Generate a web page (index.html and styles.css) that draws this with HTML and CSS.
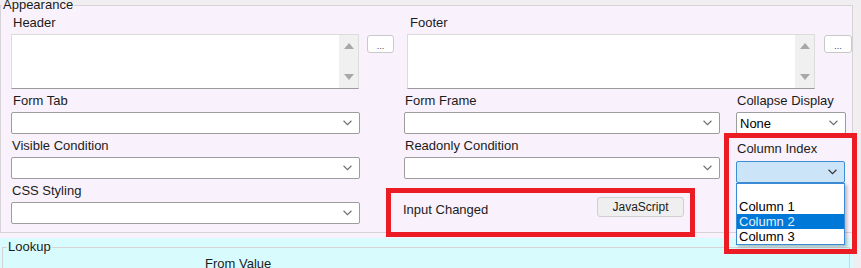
FILE: index.html
```html
<!DOCTYPE html>
<html lang="en">
<head>
    <meta charset="UTF-8">
    <meta name="viewport" content="width=device-width, initial-scale=1.0">
    <title>Field Properties</title>
    <link rel="stylesheet" href="styles.css">
</head>
<body>
    <div class="page">
        <fieldset class="group appearance">
            <legend>Appearance</legend>
            <div class="editors">
                <div class="field header-field">
                    <label>Header</label>
                    <div class="memo">
                        <div class="memo-bar"><span class="tri up"></span><span class="tri down"></span></div>
                    </div>
                </div>
                <button class="dots">...</button>
                <div class="field footer-field">
                    <label>Footer</label>
                    <div class="memo">
                        <div class="memo-bar"><span class="tri up"></span><span class="tri down"></span></div>
                    </div>
                </div>
                <button class="dots">...</button>
            </div>

            <div class="options">
                <div class="field col-a">
                    <label class="tab-label">Form Tab</label>
                    <div class="select"><span></span><svg class="chev" viewBox="0 0 8 5"><path d="M0.5 0.5 L4 4 L7.5 0.5"/></svg></div>
                </div>
                <div class="field col-b">
                    <label>Form Frame</label>
                    <div class="select"><span></span><svg class="chev" viewBox="0 0 8 5"><path d="M0.5 0.5 L4 4 L7.5 0.5"/></svg></div>
                </div>
                <div class="field col-c">
                    <label>Collapse Display</label>
                    <div class="select"><span>None</span><svg class="chev" viewBox="0 0 8 5"><path d="M0.5 0.5 L4 4 L7.5 0.5"/></svg></div>
                </div>

                <div class="field col-a">
                    <label>Visible Condition</label>
                    <div class="select"><span></span><svg class="chev" viewBox="0 0 8 5"><path d="M0.5 0.5 L4 4 L7.5 0.5"/></svg></div>
                </div>
                <div class="field col-b">
                    <label>Readonly Condition</label>
                    <div class="select"><span></span><svg class="chev" viewBox="0 0 8 5"><path d="M0.5 0.5 L4 4 L7.5 0.5"/></svg></div>
                </div>
                <div class="column-index">
                    <label>Column Index</label>
                    <div class="select open"><span></span><svg class="chev" viewBox="0 0 8 5"><path d="M0.5 0.5 L4 4 L7.5 0.5"/></svg></div>
                    <ul class="dropdown">
                        <li></li>
                        <li>Column 1</li>
                        <li class="selected">Column 2</li>
                        <li>Column 3</li>
                    </ul>
                </div>

                <div class="field col-a">
                    <label>CSS Styling</label>
                    <div class="select"><span></span><svg class="chev" viewBox="0 0 8 5"><path d="M0.5 0.5 L4 4 L7.5 0.5"/></svg></div>
                </div>
                <div class="input-changed">
                    <span class="event-name">Input Changed</span>
                    <button class="js-button">JavaScript</button>
                </div>
            </div>
        </fieldset>

        <div class="lookup-wrap">
            <fieldset class="group lookup">
                <legend>Lookup</legend>
                <div class="lookup-head">From Value</div>
            </fieldset>
        </div>
    </div>
</body>
</html>
```

FILE: styles.css
```css
body {
    margin: 0;
    height: 268px;
    overflow: hidden;
    background-color: #f1eef1;
    font-family: "Liberation Sans", Arial, sans-serif;
    font-size: 13px;
    color: #1b1b1b;
}

.page {
    width: 853px;
}

.group {
    margin: 0;
    min-width: 0;
    border: 1px solid #d6d2d8;
}

.group legend {
    padding: 0 1px;
    line-height: 10px;
    font-size: 13px;
}

.appearance {
    padding: 5px 0 0 1px;
    background-color: #f9f1fb;
}

label {
    display: block;
    line-height: 15px;
}

/* header / footer row */
.editors {
    display: flex;
    align-items: flex-start;
    margin-left: 9px;
}

.editors label {
    padding-left: 2px;
}

.header-field {
    width: 348px;
}

.footer-field {
    width: 408px;
    margin-left: 13px;
}

.footer-field label {
    padding-left: 3px;
}

.memo {
    box-sizing: border-box;
    height: 55px;
    margin-top: 4px;
    display: flex;
    justify-content: flex-end;
    background-color: #fff;
    border: 1px solid #dcdcdc;
    border-bottom-color: #9a9a9a;
}

.memo-bar {
    width: 19px;
    box-sizing: border-box;
    padding: 8px 0 8px;
    display: flex;
    flex-direction: column;
    justify-content: space-between;
    align-items: center;
    background-color: #f0f0f0;
}

.tri {
    width: 0;
    height: 0;
    border-left: 5px solid transparent;
    border-right: 5px solid transparent;
}

.tri.up {
    border-bottom: 6px solid #a8a8a8;
}

.tri.down {
    border-top: 6px solid #a8a8a8;
}

.dots {
    box-sizing: border-box;
    width: 27px;
    height: 18px;
    margin: 20px 0 0 8px;
    padding: 0 0 1px;
    display: flex;
    align-items: flex-end;
    justify-content: center;
    background-color: #fff;
    border: 1px solid #c9c9c9;
    border-radius: 3px;
    font-family: "Liberation Sans", Arial, sans-serif;
    font-size: 9px;
    line-height: 9px;
    color: #444;
}

.footer-field + .dots {
    width: 28px;
    margin-left: 9px;
}

/* dropdown rows */
.options {
    display: grid;
    grid-template-columns: 393px 332px 110px;
    row-gap: 4px;
    margin: 4px 0 0 9px;
}

.options label {
    padding-left: 1px;
}

.options .tab-label {
    padding-left: 2px;
}

.col-a {
    width: 349px;
}

.col-b {
    width: 316px;
}

.col-c {
    width: 110px;
}

.select {
    box-sizing: border-box;
    height: 22px;
    margin-top: 4px;
    display: flex;
    align-items: center;
    justify-content: space-between;
    padding: 0 7px 0 3px;
    background-color: #fff;
    border: 1px solid #9d9d9d;
    border-radius: 2px;
}

.select span {
    line-height: 15px;
    color: #000;
}

.chev {
    width: 9px;
    height: 6px;
    fill: none;
    stroke: #6e6e6e;
    stroke-width: 1;
}

.select.open {
    margin-top: 5px;
    width: 109px;
    background-color: #cce4f7;
    border-color: #3b8ed8;
}

.select.open .chev {
    stroke: #333;
}

/* annotated areas */
.column-index {
    grid-column: 3;
    grid-row: 2 / span 2;
    align-self: start;
    justify-self: start;
    position: relative;
    z-index: 2;
    box-sizing: border-box;
    width: 123px;
    height: 111px;
    margin: 0 0 -17px -7px;
    padding: 3px 6px 0 7px;
    outline: 5px solid #ec1c24;
}

.dropdown {
    list-style: none;
    margin: 0;
    padding: 0;
    width: 109px;
    box-sizing: border-box;
    background-color: #fff;
    border: 1px solid #3a8ad6;
    box-shadow: 2px 2px 3px rgba(0, 0, 0, 0.25);
}

.dropdown li {
    height: 15px;
    line-height: 15px;
    padding-left: 2px;
    color: #000;
}

.dropdown li.selected {
    background-color: #0078d7;
    color: #e6f1fc;
}

.input-changed {
    grid-column: 2;
    grid-row: 3;
    box-sizing: border-box;
    height: 39px;
    width: 299px;
    margin: 10px 0 0 -13px;
    padding: 4px 6px 0 12px;
    display: flex;
    align-items: flex-start;
    justify-content: space-between;
    outline: 5px solid #ec1c24;
}

.event-name {
    margin-top: 5px;
    line-height: 15px;
}

.js-button {
    box-sizing: border-box;
    width: 87px;
    height: 20px;
    padding: 0;
    background-color: #efefef;
    border: 1px solid #cfcfcf;
    border-radius: 3px;
    font-family: "Liberation Sans", Arial, sans-serif;
    font-size: 12px;
    color: #1b1b1b;
}

/* lookup section */
.lookup-wrap {
    border-top: 5px solid #f9f1fb;
    background-color: #d8fcfe;
    height: 40px;
}

.lookup {
    margin: 4px 3px 0 2px;
    padding: 4px 0 0 4px;
}

.lookup-head {
    padding-left: 198px;
    line-height: 15px;
}
```
